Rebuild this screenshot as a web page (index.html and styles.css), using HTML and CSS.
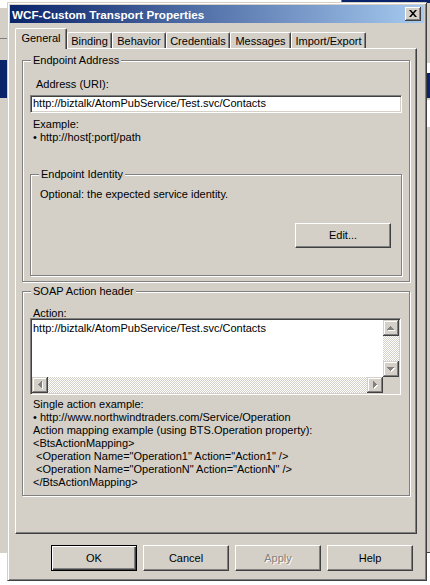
FILE: index.html
```html
<!DOCTYPE html>
<html>
<head>
<meta charset="utf-8">
<title>WCF-Custom Transport Properties</title>
<link rel="stylesheet" href="styles.css">
</head>
<body>
<div class="desktop">
  <div class="bgwin bg-top"></div>
  <div class="bgwin bg-left">
    <div class="bgl-line"></div>
    <div class="bgl-sel"></div>
  </div>
  <div class="bgwin bg-right">
    <div class="bgr-white"></div>
    <div class="bgr-sel"></div>
    <div class="bgr-white2"></div>
  </div>

  <div class="dialog">
    <div class="titlebar">
      <span class="title">WCF-Custom Transport Properties</span>
      <span class="close">
        <svg width="16" height="14" viewBox="0 0 16 14">
          <polygon points="4,3 6,3 12,10 10,10" fill="#000"/>
          <polygon points="10,3 12,3 6,10 4,10" fill="#000"/>
        </svg>
      </span>
    </div>
    <div class="body">
      <div class="tabs">
        <div class="tab sel w-general">General</div>
        <div class="tab w-binding">Binding</div>
        <div class="tab w-behavior">Behavior</div>
        <div class="tab w-cred">Credentials</div>
        <div class="tab w-msg">Messages</div>
        <div class="tab w-imp">Import/Export</div>
      </div>
      <div class="panel">
        <div class="group g-addr">
          <span class="legend">Endpoint Address</span>
          <div class="lbl addr-lbl">Address (URI):</div>
          <div class="textbox">http://biztalk/AtomPubService/Test.svc/Contacts</div>
          <div class="txt example">Example:<br>• http://host[:port]/path</div>
          <div class="group g-ident">
            <span class="legend">Endpoint Identity</span>
            <div class="txt">Optional: the expected service identity.</div>
            <div class="edit-row"><div class="btn edit">Edit...</div></div>
          </div>
        </div>
        <div class="group g-soap">
          <span class="legend">SOAP Action header</span>
          <div class="lbl action-lbl">Action:</div>
          <div class="textarea">
            <div class="ta-text">http://biztalk/AtomPubService/Test.svc/Contacts</div>
            <div class="vscroll">
              <div class="sbtn"><svg width="16" height="16" viewBox="0 0 16 16"><path d="M7 6h1v1h1v1h1v1h1v1H4V9h1V8h1V7h1z" fill="#fff" transform="translate(1 1)"/><path d="M7 6h1v1h1v1h1v1h1v1H4V9h1V8h1V7h1z" fill="#808080"/></svg></div>
              <div class="track"></div>
              <div class="sbtn"><svg width="16" height="16" viewBox="0 0 16 16"><path d="M4 6h7v1h-1v1h-1v1h-1v1H7V9H6V8H5V7H4z" fill="#fff" transform="translate(1 1)"/><path d="M4 6h7v1h-1v1h-1v1h-1v1H7V9H6V8H5V7H4z" fill="#808080"/></svg></div>
            </div>
            <div class="hscroll">
              <div class="sbtn"><svg width="16" height="16" viewBox="0 0 16 16"><path d="M6 7h1V6h1V5h1V4h1v7H9v-1H8V9H7V8H6z" fill="#fff" transform="translate(1 1)"/><path d="M6 7h1V6h1V5h1V4h1v7H9v-1H8V9H7V8H6z" fill="#808080"/></svg></div>
              <div class="track"></div>
              <div class="sbtn"><svg width="16" height="16" viewBox="0 0 16 16"><path d="M6 4h1v1h1v1h1v1h1v1H9v1H8v1H7v1H6z" fill="#fff" transform="translate(1 1)"/><path d="M6 4h1v1h1v1h1v1h1v1H9v1H8v1H7v1H6z" fill="#808080"/></svg></div>
            </div>
            <div class="corner"></div>
          </div>
          <div class="txt samples">Single action example:<br>• http://www.northwindtraders.com/Service/Operation<br>Action mapping example (using BTS.Operation property):<br>&lt;BtsActionMapping&gt;<br>&nbsp;&lt;Operation Name="Operation1" Action="Action1" /&gt;<br>&nbsp;&lt;Operation Name="OperationN" Action="ActionN" /&gt;<br>&lt;/BtsActionMapping&gt;</div>
        </div>
      </div>
      <div class="buttons">
        <div class="btn default">OK</div>
        <div class="btn">Cancel</div>
        <div class="btn disabled">Apply</div>
        <div class="btn">Help</div>
      </div>
    </div>
  </div>
</div>
</body>
</html>
```

FILE: styles.css
```css
* { box-sizing: border-box; }

html, body {
  margin: 0;
  padding: 0;
}

body {
  width: 430px;
  height: 585px;
  overflow: hidden;
  background: #fff;
  color: #000;
  font-family: "Liberation Sans", Arial, sans-serif;
  font-size: 11px;
  line-height: 13px;
}

.desktop {
  position: relative;
  width: 430px;
  height: 585px;
}

/* background windows peeking around the dialog */
.bgwin { position: absolute; }

.bg-top {
  left: 341px;
  top: 0;
  width: 89px;
  height: 3px;
  background: #0a246a;
  border-left: 1px solid #808080;
}

.bg-left {
  left: 0;
  top: 8px;
  width: 10px;
  height: 545px;
  background: #d4d0c8;
}

.bgl-line {
  margin-top: 30px;
  height: 1px;
  background: #808080;
}

.bgl-sel {
  margin-top: 21px;
  height: 38px;
  background: #0a246a;
}

.bg-right {
  left: 425px;
  top: 3px;
  width: 5px;
  height: 550px;
  background: #d4d0c8;
  border-bottom: 1px solid #404040;
}

.bgr-white {
  margin-top: 60px;
  height: 10px;
  background: #fff;
}

.bgr-sel {
  height: 25px;
  background: #0a246a;
}

.bgr-white2 {
  margin-top: 2px;
  height: 27px;
  background: #fff;
}

/* dialog window */
.dialog {
  position: absolute;
  left: 7px;
  top: 2px;
  width: 420px;
  height: 579px;
  background: #d4d0c8;
  border: 1px solid;
  border-color: #d4d0c8 #404040 #404040 #d4d0c8;
  box-shadow: inset 1px 1px #fff, inset -1px -1px #808080;
  padding: 2px;
  display: flex;
  flex-direction: column;
}

.titlebar {
  height: 18px;
  flex: none;
  background: linear-gradient(to right, #0a246a, #a6caf0);
  display: flex;
  align-items: center;
  justify-content: space-between;
  padding: 0 3px 0 2px;
}

.title {
  color: #fff;
  font-weight: bold;
  font-size: 11.7px;
  white-space: nowrap;
}

.close {
  width: 16px;
  height: 14px;
  display: block;
  background: #d4d0c8;
  box-shadow: inset -1px -1px #404040, inset 1px 1px #fff, inset -2px -2px #808080;
}

.close svg { display: block; }

.body {
  flex: 1;
  display: flex;
  flex-direction: column;
  padding: 5px 7px 0 5px;
}

/* tabs */
.tabs {
  display: flex;
  align-items: flex-end;
  height: 20px;
  flex: none;
  position: relative;
  z-index: 1;
}

.tab {
  height: 16px;
  padding-top: 2px;
  text-align: center;
  white-space: nowrap;
  background: #d4d0c8;
  border-top: 1px solid #fff;
  border-left: 1px solid #fff;
  border-right: 1px solid #404040;
  box-shadow: inset -1px 0 #808080;
  border-radius: 2px 2px 0 0;
}

.tab.sel {
  height: 21px;
  margin-bottom: -1px;
  padding-top: 3px;
}

.w-general { width: 52px; }
.w-binding { width: 45px; }
.w-behavior { width: 54px; }
.w-cred { width: 64px; }
.w-msg { width: 61px; }
.w-imp { width: 75px; }

.panel {
  height: 486px;
  flex: none;
  border: 1px solid;
  border-color: #fff #404040 #404040 #fff;
  box-shadow: inset -1px -1px #808080;
  padding: 11px 6px 0 6px;
}

/* group boxes */
.group {
  position: relative;
  border: 1px solid #808080;
  box-shadow: inset 1px 1px #fff, 1px 1px #fff;
}

.legend {
  position: absolute;
  top: -7px;
  left: 8px;
  padding: 0 2px;
  background: #d4d0c8;
  white-space: nowrap;
}

.g-addr {
  height: 222px;
  padding: 17px 7px 0 7px;
}

.addr-lbl { margin-left: 6px; }

.textbox {
  margin-top: 4px;
  height: 18px;
  width: 372px;
  background: #fff;
  border: 1px solid;
  border-color: #808080 #fff #fff #808080;
  box-shadow: inset 1px 1px #404040, inset -1px -1px #d4d0c8;
  padding: 1px 0 0 2px;
  white-space: nowrap;
  overflow: hidden;
}

.example {
  margin-top: 5px;
  margin-left: 3px;
}

.g-ident {
  margin-top: 30px;
  width: 372px;
  height: 102px;
  padding: 13px 10px 0 9px;
}

.edit-row {
  display: flex;
  justify-content: flex-end;
  margin-top: 22px;
}

/* buttons */
.btn {
  width: 86px;
  height: 26px;
  display: flex;
  align-items: center;
  justify-content: center;
  background: #d4d0c8;
  border: 1px solid;
  border-color: #fff #404040 #404040 #fff;
  box-shadow: inset -1px -1px #808080;
  white-space: nowrap;
}

.btn.edit {
  width: 96px;
  height: 25px;
}

.btn.default {
  border: 1px solid #000;
  box-shadow: inset 1px 1px #fff, inset -1px -1px #404040, inset -2px -2px #808080;
}

.btn.disabled {
  color: #808080;
  text-shadow: 1px 1px #fff;
}

.buttons {
  display: flex;
  justify-content: flex-end;
  gap: 6px;
  margin-top: 11px;
  padding-right: 4px;
}

/* SOAP group */
.g-soap {
  margin-top: 9px;
  height: 205px;
  padding: 15px 7px 0 7px;
}

.action-lbl {
  margin-left: 3px;
  margin-bottom: -2px;
}

.textarea {
  width: 371px;
  height: 77px;
  background: #fff;
  border: 1px solid;
  border-color: #808080 #fff #fff #808080;
  box-shadow: inset 1px 1px #404040, inset -1px -1px #d4d0c8;
  padding: 1px;
  display: grid;
  grid-template-columns: 1fr 16px;
  grid-template-rows: 1fr 16px;
}

.ta-text {
  padding: 2px 0 0 1px;
  white-space: nowrap;
  overflow: hidden;
}

.vscroll {
  display: flex;
  flex-direction: column;
}

.hscroll {
  display: flex;
}

.track {
  flex: 1;
  background: repeating-conic-gradient(#fff 0 25%, #d4d0c8 0 50%) 0 0 / 2px 2px;
}

.sbtn {
  width: 16px;
  height: 16px;
  flex: none;
  background: #d4d0c8;
  box-shadow: inset -1px -1px #404040, inset 1px 1px #d4d0c8, inset -2px -2px #808080, inset 2px 2px #fff;
}

.sbtn svg { display: block; }

.corner { background: #d4d0c8; }

.samples {
  margin-top: 3px;
  margin-left: 3px;
  white-space: nowrap;
}
```
